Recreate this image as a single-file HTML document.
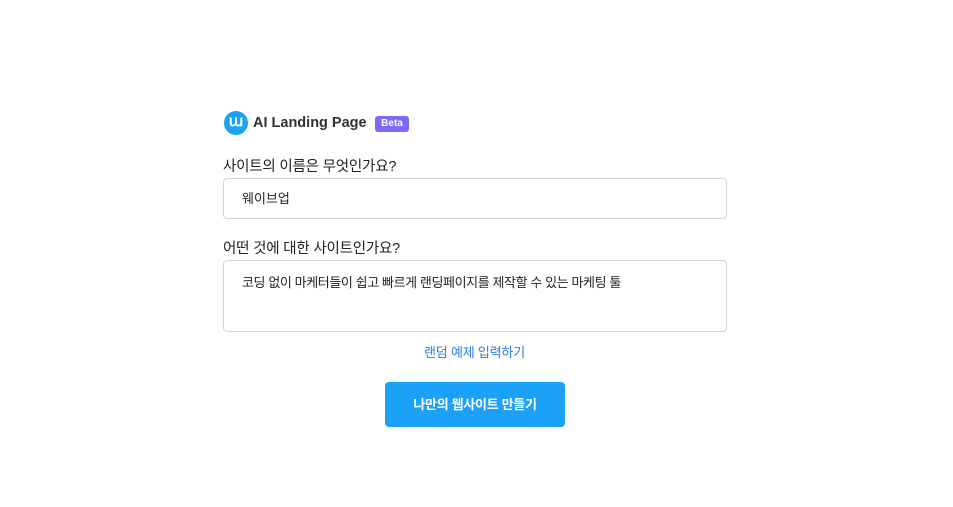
<!DOCTYPE html>
<html><head><meta charset="utf-8"><style>
body{margin:0;background:#fff;width:953px;height:507px;position:relative;font-family:"Liberation Sans","Noto Sans CJK KR",sans-serif;color:#222}
.a{position:absolute}
.box{position:absolute;left:223px;width:504px;border:1px solid #d4d4d4;border-radius:4px;background:#fff;box-sizing:border-box}
</style></head><body>
<div class="a" style="left:224px;top:111px;width:24px;height:24px;border-radius:50%;background:#1da1f5;color:#fff;font-weight:bold;font-size:15px;line-height:22px;text-align:center">ա</div>
<div class="a" style="left:253px;top:115px;font-size:14.5px;font-weight:bold;color:#333">AI Landing Page</div>
<div class="a" style="left:375px;top:116px;width:34px;height:16px;border-radius:3px;background:#7b6cf6;color:#fff;font-size:10px;font-weight:bold;line-height:16px;text-align:center">Beta</div>
<div class="a" style="left:223px;top:155px;font-size:14.5px;letter-spacing:-0.2px">사이트의 이름은 무엇인가요?</div>
<div class="box" style="top:178px;height:41px"><div class="a" style="left:18px;top:9px;font-size:13px">웨이브업</div></div>
<div class="a" style="left:223px;top:237px;font-size:14.5px;letter-spacing:-0.2px">어떤 것에 대한 사이트인가요?</div>
<div class="box" style="top:260px;height:72px"><div class="a" style="left:18px;top:11px;font-size:13px;letter-spacing:-0.4px">코딩 없이 마케터들이 쉽고 빠르게 랜딩페이지를 제작할 수 있는 마케팅 툴</div></div>
<div class="a" style="left:0;width:949px;top:342px;text-align:center;font-size:13px;letter-spacing:-0.2px;color:#2f7be8">랜덤 예제 입력하기</div>
<div class="a" style="left:385px;top:382px;width:180px;height:45px;border-radius:4px;background:#1ba1f7;color:#fff;font-size:13px;font-weight:bold;line-height:45px;text-align:center;letter-spacing:-0.3px">나만의 웹사이트 만들기</div>
</body></html>
